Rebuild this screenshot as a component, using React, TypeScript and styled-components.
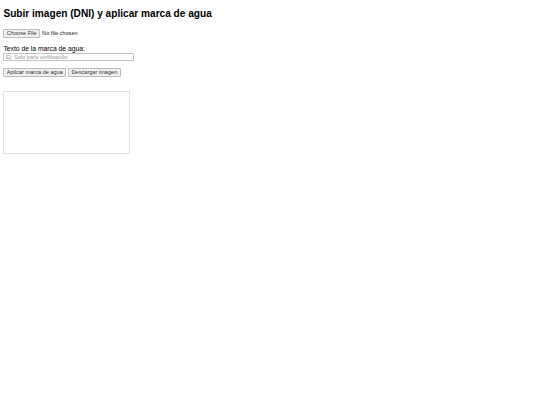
import styled, { createGlobalStyle } from "styled-components";

// the reference is a 1280px page shown at 540px, so sizes here are pre-scaled (x0.42)
const GlobalStyle = createGlobalStyle`
  html, body {
    margin: 0;
    background: #fff;
  }
  body {
    font-family: "Liberation Sans", Arial, sans-serif;
    color: #000;
  }
`;

const Page = styled.div`
  display: flex;
  flex-direction: column;
  align-items: flex-start;
  padding: 8px 0 0 3.4px;
`;

const Title = styled.h2`
  margin: 0 0 10px;
  font-size: 10.125px;
  font-weight: 700;
  line-height: 11.3px;
`;

const FileRow = styled.div`
  display: flex;
  align-items: center;
  gap: 2px;
  height: 8px;
  font-size: 5.625px;
`;

const ControlButton = styled.button`
  height: 8.4px;
  padding: 0 2.4px;
  border: 1px solid #bdbdbd;
  border-radius: 1px;
  background: #f0f0f0;
  color: #333;
  font-family: "Liberation Sans", Arial, sans-serif;
  font-size: 5.625px;
  line-height: 6px;
  white-space: nowrap;
`;

const NoFile = styled.span`
  color: #222;
`;

const Label = styled.label`
  margin-top: 8.1px;
  font-size: 6.75px;
  line-height: 7.55px;
`;

const TextInput = styled.input`
  box-sizing: border-box;
  width: 130.5px;
  height: 8px;
  padding: 0 1.5px;
  border: 1px solid #c4c4c4;
  border-radius: 1px;
  background: #fff;
  font-family: "Liberation Sans", Arial, sans-serif;
  font-size: 5.625px;
  outline: none;
  &::placeholder {
    color: #999;
  }
`;

const Actions = styled.div`
  display: flex;
  gap: 1.8px;
  margin-top: 7.3px;
`;

const Preview = styled.canvas`
  box-sizing: border-box;
  width: 127px;
  height: 63px;
  margin-top: 14.3px;
  border: 1px solid #e3e3e3;
`;

export default function App() {
  return (
    <>
      <GlobalStyle />
      <Page>
        <Title>Subir imagen (DNI) y aplicar marca de agua</Title>
        <FileRow>
          <ControlButton type="button">Choose File</ControlButton>
          <NoFile>No file chosen</NoFile>
        </FileRow>
        <Label htmlFor="wm">Texto de la marca de agua:</Label>
        <TextInput id="wm" type="text" placeholder="Ej: Solo para verificación" />
        <Actions>
          <ControlButton type="button">Aplicar marca de agua</ControlButton>
          <ControlButton type="button">Descargar imagen</ControlButton>
        </Actions>
        <Preview width={300} height={150} />
      </Page>
    </>
  );
}
